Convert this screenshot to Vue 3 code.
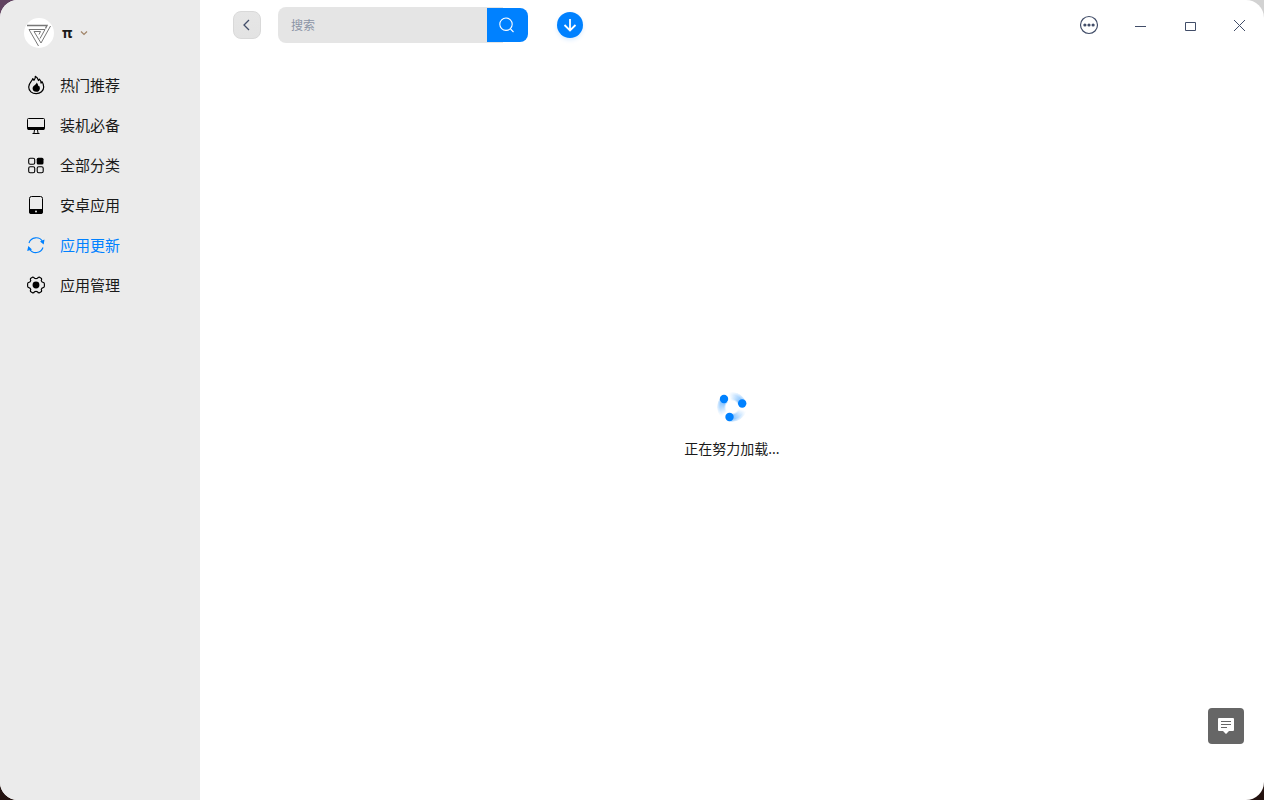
<template>
  <div class="window">
    <aside class="sidebar">
      <button class="user" type="button">
        <svg class="avatar" viewBox="0 0 30 30">
          <circle cx="15" cy="15" r="15" fill="#fff" />
          <g fill="none" stroke="#777">
            <path d="M3 7.500h20l-1.500 3" stroke-width="1.400" />
            <path d="M26.500 8L17 25 10 13.500h6.500l-1.500 3" />
            <path d="M14.500 28L5 11.500h16l-5 9" />
          </g>
        </svg>
        <span class="user-name">π</span>
        <svg class="arrow" viewBox="0 0 8 8"><path d="M1 2.500l3 3 3-3" fill="none" stroke="#a08468" stroke-width="1.200" /></svg>
      </button>

      <nav class="menu">
        <a
          v-for="item in menu"
          :key="item.id"
          href="#"
          class="menu-item"
          :class="{ active: item.id === current }"
          @click.prevent="current = item.id"
        >
          <svg v-if="item.id === 'hot'" class="icon" viewBox="0 0 20 20">
            <path d="M9.300 1.300c.3 1.800-.5 2.700-1.300 4C7.400 4.600 7 4 6.800 3.500 6.500 6 2.700 7.600 2.700 12c0 4 3.300 6.700 7.500 6.700s7.500-2.800 7.500-6.800c0-2-.7-3.800-1.600-5.200-.2.700-.5 1.100-1.100 1.400.1-1.600-.5-3-1.600-4-.2.700-.4 1.100-.9 1.400-.6-1.800-1.500-3.200-3.200-4.200z" fill="none" stroke="currentColor" stroke-width="1.200" stroke-linejoin="round" />
            <path d="M10.500 7.500c.3 2.200-3.900 3-3.900 6 0 2 1.500 3.300 3.600 3.300s3.700-1.400 3.700-3.400c0-1.200-.4-2.100-1.100-2.900-.1.400-.3.600-.6.800-.1-1.900-.6-2.700-1.700-3.800z" fill="currentColor" />
          </svg>
          <svg v-else-if="item.id === 'must'" class="icon" viewBox="0 0 20 20">
            <rect x="1.500" y="3.500" width="17" height="11" rx="1" fill="none" stroke="currentColor" />
            <path d="M1.500 12h17v2l-1 1h-15l-1-1z" fill="currentColor" />
            <path d="M8.500 15l-.5 3m3.500-3l.5 3M6.500 18.500h7" fill="none" stroke="currentColor" />
          </svg>
          <svg v-else-if="item.id === 'all'" class="icon" viewBox="0 0 20 20">
            <g fill="none" stroke="currentColor" stroke-width="1.100">
              <rect x="2.700" y="3.200" width="6" height="6" rx="1.500" />
              <rect x="2.700" y="11.700" width="6" height="6" rx="1.500" />
              <rect x="11.200" y="11.700" width="6" height="6" rx="1.500" />
            </g>
            <rect x="10.700" y="2.700" width="6.800" height="6.800" rx="1.500" fill="currentColor" />
          </svg>
          <svg v-else-if="item.id === 'android'" class="icon" viewBox="0 0 20 20">
            <rect x="3.500" y="1.500" width="13" height="17" rx="2" fill="none" stroke="currentColor" />
            <path d="M3 14h14v3q0 2-2 2H5q-2 0-2-2z" fill="currentColor" />
            <circle cx="10" cy="16.500" r="1" fill="#ebebeb" />
          </svg>
          <svg v-else-if="item.id === 'update'" class="icon" viewBox="0 0 20 20">
            <path d="M3 8A7.500 7.500 0 0 1 16.600 6.500M17 12.500A7.500 7.500 0 0 1 3.500 14" fill="none" stroke="currentColor" stroke-width="1.100" />
            <path d="M18.500 4.500L17.700 9.500l-3.700-3zM1.200 16L2.300 11l3.700 3.500z" fill="currentColor" />
          </svg>
          <svg v-else class="icon" viewBox="-0.5 -0.5 21 21">
            <path d="M6.700 1.700q1.300 0 1.700 1.200 1.600.8 3.200 0 .4-1.200 1.700-1.200l2.500 1.500q.4.900-.3 2.200.4 1.600 2 1.900 1.300.2 1.300 1.500v2.400q0 1.300-1.300 1.500-1.600.3-2 1.900.7 1.300.3 2.200l-2.500 1.500q-1.300 0-1.700-1.200-1.600-.8-3.200 0-.4 1.200-1.700 1.200l-2.500-1.500q-.4-.9.300-2.200-.4-1.600-2-1.900-1.300-.2-1.300-1.500V8.800q0-1.300 1.300-1.500 1.600-.3 2-1.900-.7-1.300-.3-2.200z" fill="none" stroke="currentColor" stroke-width="1.200" stroke-linejoin="round" />
            <circle cx="10" cy="10" r="3.600" fill="currentColor" />
          </svg>
          <span>{{ item.label }}</span>
        </a>
      </nav>
    </aside>

    <main class="main">
      <header class="topbar">
        <button class="back" type="button" aria-label="返回">
          <svg width="12" height="14" viewBox="0 0 12 14"><path d="M8 2L3 7l5 5" fill="none" stroke="#414d68" stroke-width="1.300" /></svg>
        </button>
        <form class="search" @submit.prevent>
          <input v-model="keyword" type="text" placeholder="搜索" aria-label="搜索" />
          <button type="submit" aria-label="搜索">
            <svg width="16" height="16" viewBox="0 0 16 16" fill="none" stroke="#fff" stroke-width="1.100"><circle cx="7" cy="7.200" r="6.200" /><path d="M11.500 12l3 3" /></svg>
          </button>
        </form>
        <button class="download" type="button" aria-label="下载">
          <svg width="26" height="26" viewBox="0 0 26 26"><path d="M13 7v11M7.500 13l5.500 5.500 5.500-5.500" fill="none" stroke="#fff" stroke-width="1.800" /></svg>
        </button>

        <div class="win-controls">
          <button type="button" aria-label="更多">
            <svg width="20" height="20" viewBox="0 0 20 20">
              <circle cx="10" cy="10" r="8.500" fill="none" stroke="#414d68" stroke-width="1.200" />
              <g fill="#414d68"><circle cx="5.900" cy="10" r="1.600" /><circle cx="10" cy="10" r="1.600" /><circle cx="14.100" cy="10" r="1.600" /></g>
            </svg>
          </button>
          <button type="button" aria-label="最小化">
            <svg width="14" height="12" viewBox="0 0 14 12"><path d="M3 7.500h11" stroke="#414d68" /></svg>
          </button>
          <button type="button" aria-label="最大化">
            <svg width="14" height="12" viewBox="0 0 14 12"><path d="M3.500 3.500h10v8h-10z" fill="none" stroke="#414d68" /></svg>
          </button>
          <button type="button" aria-label="关闭">
            <svg width="12" height="12" viewBox="0 0 12 12"><path d="M1 1l11 11M12 1L1 12" stroke="#414d68" /></svg>
          </button>
        </div>
      </header>

      <section class="content">
        <div class="spinner">
          <svg viewBox="0 0 30 30" fill="#0081ff"><circle cx="7" cy="7" r="4.200" /><circle cx="25.200" cy="11.500" r="4.200" /><circle cx="12.500" cy="25" r="4.200" /></svg>
        </div>
        <p class="loading-text">正在努力加载...</p>
      </section>
    </main>

    <button class="feedback" type="button" aria-label="反馈">
      <svg width="18" height="18" viewBox="0 0 18 18">
        <path d="M2 1h14q1 0 1 1v11q0 1-1 1h-4l-3 3-3-3H2q-1 0-1-1V2q0-1 1-1z" fill="#fff" />
        <path d="M4 4.500h10M4 7.500h10M4 10.500h6" stroke="#666" />
      </svg>
    </button>
  </div>
</template>

<script setup>
import { ref } from 'vue'

const menu = [
  { id: 'hot', label: '热门推荐' },
  { id: 'must', label: '装机必备' },
  { id: 'all', label: '全部分类' },
  { id: 'android', label: '安卓应用' },
  { id: 'update', label: '应用更新' },
  { id: 'manage', label: '应用管理' }
]

const current = ref('update')
const keyword = ref('')
</script>

<style>
/* desktop behind the rounded window */
body {
  margin: 0;
  background:
    linear-gradient(#614360, #614360) left top / 50% 50% no-repeat,
    linear-gradient(#d2d2d2, #d2d2d2) right top / 50% 50% no-repeat,
    #23120f;
}
</style>

<style scoped>
.window {
  display: flex;
  min-height: 100vh;
  background: #fff;
  border-radius: 18px;
  overflow: hidden;
  font-family: "Noto Sans", "Noto Sans CJK SC", sans-serif;
  color: #1a1a1a;
}
button {
  border: none;
  padding: 0;
  background: none;
  font-family: inherit;
  color: inherit;
  cursor: pointer;
}
svg {
  display: block;
}

.sidebar {
  width: 200px;
  flex-shrink: 0;
  background: #ebebeb;
}
.user {
  display: flex;
  align-items: center;
  height: 65px;
  padding-left: 24px;
}
.avatar {
  width: 30px;
  height: 30px;
}
.user-name {
  margin: 0 8px;
  font-size: 14px;
  font-weight: bold;
}
.arrow {
  width: 8px;
  height: 8px;
}
.menu-item {
  display: flex;
  align-items: center;
  gap: 14px;
  height: 40px;
  padding-left: 26px;
  font-family: "Noto Sans CJK SC", sans-serif;
  font-size: 15px;
  line-height: 20px;
  color: #1a1a1a;
  text-decoration: none;
}
.icon {
  width: 20px;
  height: 20px;
  color: #000;
}
.menu-item.active,
.menu-item.active .icon {
  color: #0081ff;
}

.main {
  flex: 1;
  min-width: 0;
  display: flex;
  flex-direction: column;
}
.topbar {
  display: flex;
  align-items: center;
  height: 50px;
  padding-left: 33px;
}
.back {
  display: flex;
  align-items: center;
  justify-content: center;
  box-sizing: border-box;
  width: 28px;
  height: 28px;
  border: 1px solid #d9d9d9;
  border-radius: 8px;
  background: linear-gradient(#e6e6e6, #e3e3e3);
}
.search {
  display: flex;
  align-items: center;
  width: 250px;
  height: 36px;
  margin: 0 29px 0 17px;
  border-radius: 8px;
  background: linear-gradient(90deg, #e5e5e5 90%, transparent 90%);
}
.search input {
  flex: 1;
  min-width: 0;
  padding: 0 13px;
  border: none;
  outline: none;
  background: none;
  font-family: inherit;
  font-size: 12px;
}
.search input::placeholder {
  color: #8b94a5;
}
.search button {
  display: flex;
  align-items: center;
  justify-content: center;
  box-sizing: border-box;
  width: 41px;
  height: 34px;
  padding-right: 2px;
  border-radius: 0 8px 8px 0;
  background: #0081ff;
}
.download {
  width: 26px;
  height: 26px;
  border-radius: 50%;
  background: #0081ff;
  box-shadow: 0 2px 4px rgba(0, 129, 255, 0.15);
}
.win-controls {
  display: flex;
  margin-left: auto;
}
.win-controls button {
  display: flex;
  align-items: center;
  justify-content: center;
  width: 50px;
  height: 50px;
}

.content {
  flex: 1;
  display: flex;
  flex-direction: column;
  align-items: center;
  justify-content: center;
  gap: 16px;
  padding-top: 2px;
}
.spinner {
  position: relative;
  width: 30px;
  height: 30px;
}
.spinner::before {
  content: "";
  position: absolute;
  inset: 0;
  border-radius: 50%;
  background: repeating-conic-gradient(from 315deg, transparent 0 30deg, rgba(0, 129, 255, 0.6) 120deg);
  mask: radial-gradient(transparent 6px, #000 8px, #000 12px, transparent 16px);
}
.spinner svg {
  position: relative;
}
.loading-text {
  margin: 0;
  font-size: 14px;
  line-height: 22px;
}

/* floats over the page */
.feedback {
  position: fixed;
  right: 20px;
  bottom: 56px;
  display: flex;
  align-items: center;
  justify-content: center;
  width: 36px;
  height: 36px;
  border-radius: 4px;
  background: #666;
}
</style>
